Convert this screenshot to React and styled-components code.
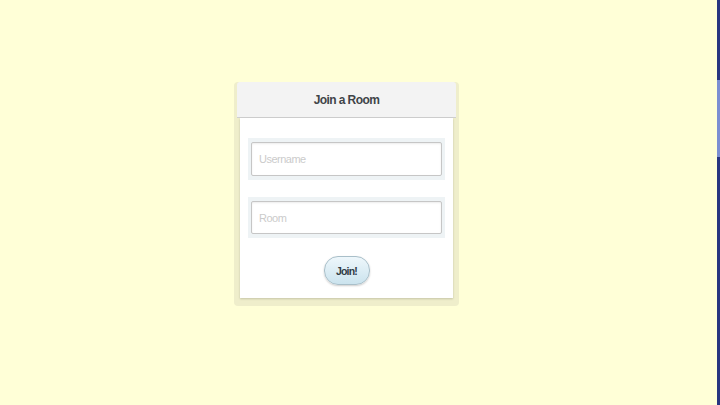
import React from "react";
import styled, { createGlobalStyle } from "styled-components";

const Global = createGlobalStyle`
  html, body { margin: 0; padding: 0; }
  body { background: #ffffd7; font-family: "Liberation Sans", Arial, sans-serif; }
`;

const Page = styled.div`
  display: flex;
  width: 720px;
  height: 405px;
  overflow: hidden;
`;

const Main = styled.div`
  flex: 1;
  padding: 93px 0 0 234px;
`;

const ScrollTrack = styled.div`
  width: 3px;
  background: #283580;
  padding-top: 80px;
`;

const ScrollThumb = styled.div`
  height: 77px;
  background: #7b8ed2;
`;

const Frame = styled.div`
  width: 225px;
  box-sizing: border-box;
  padding: 0 3px 8px 3px;
  background: #efeecb;
  border-radius: 4px;
`;

const Header = styled.div`
  margin-top: -11px;
  height: 35px;
  background: #f3f3f3;
  border-bottom: 1px solid #cfcfcf;
  border-radius: 3px 3px 0 0;
  display: flex;
  align-items: center;
  justify-content: center;
  font-size: 12px;
  font-weight: bold;
  color: #404448;
  letter-spacing: -0.6px;
`;

const Body = styled.div`
  margin: 0 3px;
  height: 180px;
  box-sizing: border-box;
  background: #ffffff;
  box-shadow: 0 1px 2px rgba(0, 0, 0, 0.18);
  padding: 20px 8px 0 8px;
  display: flex;
  flex-direction: column;
  align-items: stretch;
`;

const FieldWrap = styled.div`
  background: #eef3f5;
  padding: 4px 3px;
  margin-bottom: ${(p) => p.$gap}px;
`;

const Input = styled.input`
  display: block;
  width: 100%;
  box-sizing: border-box;
  height: ${(p) => p.$h}px;
  border: 1px solid #c6c6c6;
  border-radius: 2px;
  background: #fff;
  box-shadow: inset 0 1px 2px rgba(0, 0, 0, 0.08);
  padding: 0 7px;
  font-family: "Liberation Sans", Arial, sans-serif;
  font-size: 11px;
  letter-spacing: -0.5px;
  color: #333;
  outline: none;
  &::placeholder { color: #cbcbcb; }
`;

const ButtonRow = styled.div`
  display: flex;
  justify-content: center;
`;

const Button = styled.button`
  width: 46px;
  height: 29px;
  border-radius: 14px;
  border: 1px solid #a9bfc9;
  background: linear-gradient(#eef7fb, #cbe3ee);
  box-shadow: 0 1px 2px rgba(0, 0, 0, 0.2);
  font-family: "Liberation Sans", Arial, sans-serif;
  font-size: 10.5px;
  font-weight: bold;
  letter-spacing: -0.8px;
  color: #2f3b45;
  padding: 0;
`;

export default function App() {
  return (
    <>
      <Global />
      <Page>
        <Main>
          <Frame>
            <Header>Join a Room</Header>
            <Body>
              <FieldWrap $gap={17}>
                <Input $h={34} placeholder="Username" />
              </FieldWrap>
              <FieldWrap $gap={18}>
                <Input $h={33} placeholder="Room" />
              </FieldWrap>
              <ButtonRow>
                <Button>Join!</Button>
              </ButtonRow>
            </Body>
          </Frame>
        </Main>
        <ScrollTrack>
          <ScrollThumb />
        </ScrollTrack>
      </Page>
    </>
  );
}
